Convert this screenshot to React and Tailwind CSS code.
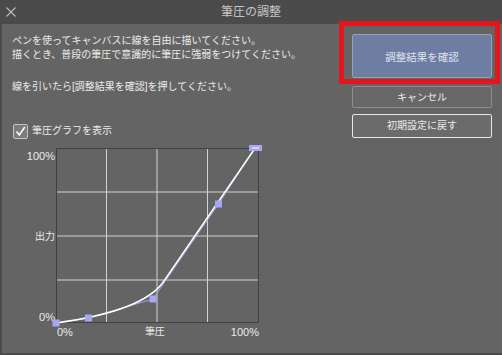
import React from "react";

const font = "font-['Liberation_Sans','Noto_Sans_CJK_JP',sans-serif]";

function PressureGraph() {
  // plot area is 203 x 175, origin at top-left
  const pts = [
    [0, 175],
    [32.5, 170],
    [97, 151],
    [162.5, 56],
  ];
  const line = [...pts, [199, 0]].map((p) => p.join(",")).join(" ");

  return (
    <svg width="203" height="175" viewBox="0 0 203 175" className="block overflow-visible">
      {/* grid */}
      {[50.5, 101, 151.5].map((x) => (
        <line key={"v" + x} x1={x} y1="0" x2={x} y2="175" stroke="#d2d2d2" strokeWidth="1" />
      ))}
      {[44, 88, 132].map((y) => (
        <line key={"h" + y} x1="0" y1={y} x2="203" y2={y} stroke="#d2d2d2" strokeWidth="1" />
      ))}
      <rect x="0.5" y="0.5" width="202" height="174" fill="none" stroke="#404040" strokeWidth="1" />

      {/* control polyline */}
      <polyline points={line} fill="none" stroke="#a3a3ee" strokeWidth="1" />

      {/* pressure curve */}
      <path
        d="M0,175 C44,169 92,157 108,133 L198.5,1"
        fill="none"
        stroke="#ffffff"
        strokeWidth="1.5"
      />

      {/* control points */}
      {pts.map(([x, y], i) => (
        <rect key={i} x={x - 3.5} y={y - 3.5} width="7" height="7" fill="#a6a6f5" />
      ))}
      <rect x="193" y="-3" width="13" height="6" fill="#a6a6f5" />
      <line x1="196" y1="0" x2="203" y2="0" stroke="#ffffff" strokeWidth="1" />
    </svg>
  );
}

export default function App() {
  return (
    <div className={`relative w-[502px] h-[355px] overflow-hidden bg-[#4b4b4b] ${font}`}>
      {/* title bar */}
      <div className="h-6 flex items-center">
        <div className="w-[24px] pl-[6px] flex items-center">
          <svg width="10" height="10" viewBox="0 0 10 10">
            <path d="M0.5 0.5 L9.5 9.5 M9.5 0.5 L0.5 9.5" stroke="#bdbdbd" strokeWidth="1.1" />
          </svg>
        </div>
        <div className="flex-1 text-center text-[12px] leading-none text-[#c6c6c6]">筆圧の調整</div>
        <div className="w-[24px]" />
      </div>

      {/* body */}
      <div className="ml-[2px] h-[329px] bg-[#646464] flex">
        <div className="flex-1 pl-[10px] pt-[10px] text-[#ebebeb]">
          <p className="text-[10px] leading-[14px]">ペンを使ってキャンバスに線を自由に描いてください。</p>
          <p className="text-[10px] leading-[14px]">描くとき、普段の筆圧で意識的に筆圧に強弱をつけてください。</p>
          <p className="mt-[18px] text-[10px] leading-[14px]">線を引いたら[調整結果を確認]を押してください。</p>

          <div className="mt-[30px] flex items-center h-[14px]">
            <div className="w-[15px] h-[15px] ml-px border border-[#c4c4c4] bg-[#7c7c7c] rounded-[2px] flex items-center justify-center">
              <svg width="11" height="11" viewBox="0 0 11 11">
                <path d="M1.5 5.5 L4.3 9 L9.8 1" fill="none" stroke="#ffffff" strokeWidth="1.6" />
              </svg>
            </div>
            <span className="ml-[4px] text-[10px] leading-[14px]">筆圧グラフを表示</span>
          </div>

          <div className="mt-[10px] flex">
            <div className="w-[44px] h-[176px] pr-px pt-px flex flex-col justify-between items-end leading-[14px]">
              <span className="text-[11px]">100%</span>
              <span className="text-[10px]">出力</span>
              <span className="text-[11px]">0%</span>
            </div>
            <PressureGraph />
          </div>
          <div className="mt-[1px] ml-[44px] w-[203px] flex justify-between items-center leading-[14px]">
            <span className="text-[11px] ml-px">0%</span>
            <span className="text-[10px] ml-[6px]">筆圧</span>
            <span className="text-[11px]">100%</span>
          </div>
        </div>

        <div className="w-[150px] pr-[10px] pt-[10px] flex flex-col">
          <button className="h-[44px] w-full rounded-[2px] border border-[#97a2bd] bg-[#6e7da2] text-[10.5px] text-[#dfe3ee] pt-[3px]">
            調整結果を確認
          </button>
          <button className="mt-[8px] h-[22px] w-full rounded-[2px] border border-[#8e8e8e] bg-[#676767] text-[10px] text-[#ececec]">
            キャンセル
          </button>
          <button className="mt-[6px] h-[24px] w-full rounded-[2px] border border-[#e8e8e8] bg-[#6b6b6b] text-[10px] text-[#ececec] pb-[2px]">
            初期設定に戻す
          </button>
        </div>
      </div>

      {/* red highlight annotation */}
      <div className="absolute left-[339px] top-[21px] w-[161px] h-[63px] border-[5px] border-[#e3161d] pointer-events-none" />
    </div>
  );
}
